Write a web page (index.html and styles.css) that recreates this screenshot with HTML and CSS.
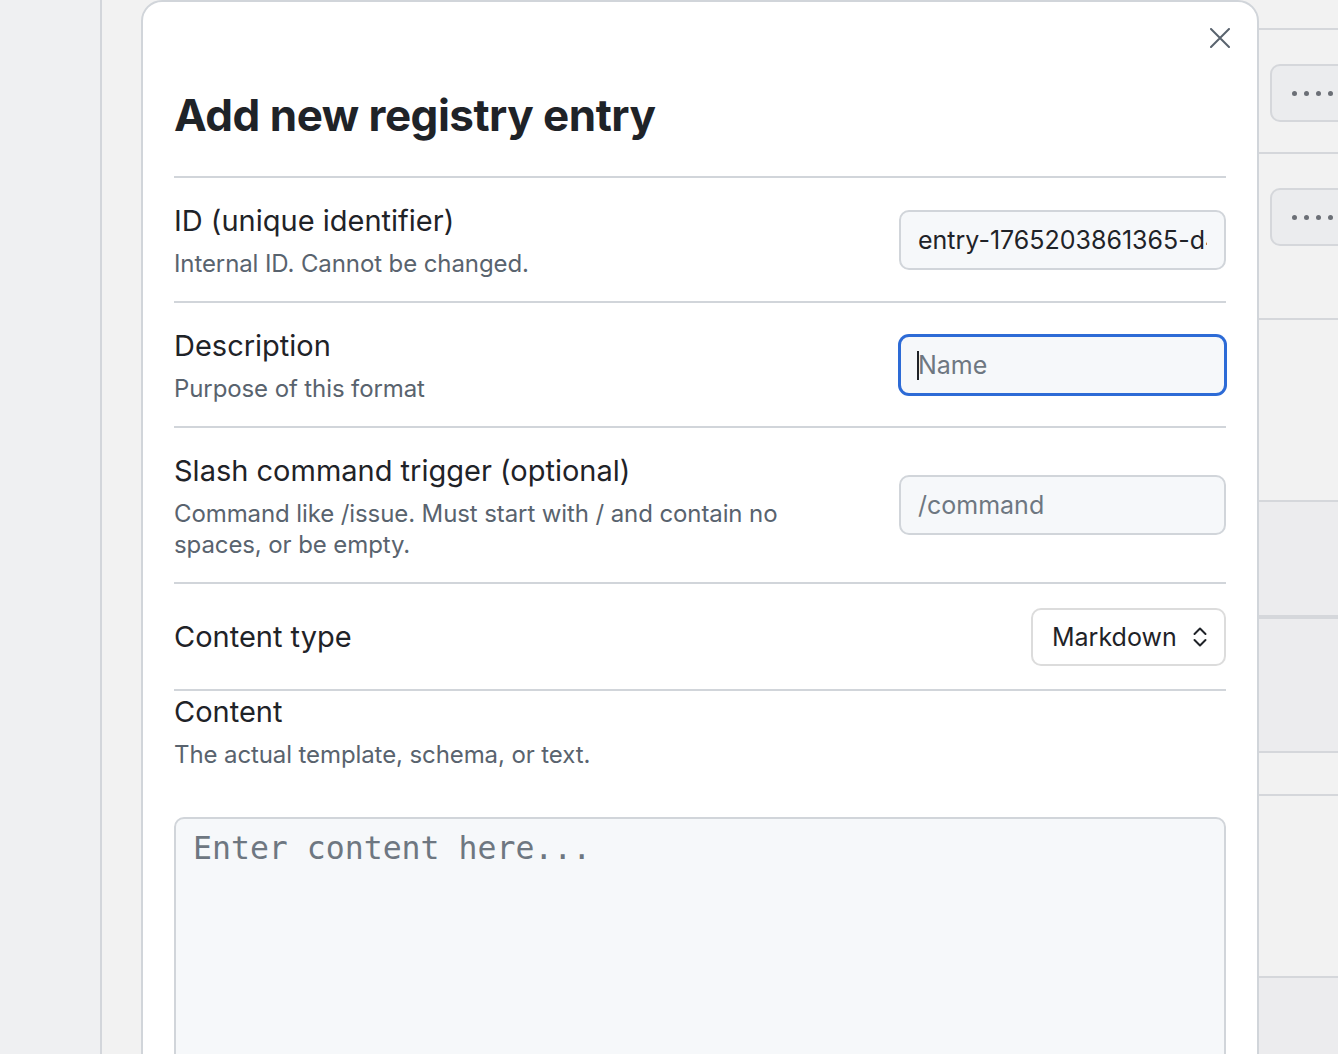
FILE: index.html
```html
<!DOCTYPE html>
<html lang="en">
<head>
  <meta charset="UTF-8" />
  <title>Registry</title>
  <meta name="viewport" content="width=device-width, initial-scale=1" />
  <link rel="stylesheet" href="styles.css">
</head>
<body>
  <aside class="sidebar" aria-label="Navigation"></aside>

  <main class="page">
    <!-- Registry list behind the dialog -->
    <div class="entry-list">
      <div class="entry-row row-head"></div>
      <div class="entry-row row-a">
        <span></span>
        <button class="more-btn" aria-label="More actions"><i></i><i></i><i></i><i></i><i></i></button>
      </div>
      <div class="entry-row row-b">
        <span></span>
        <button class="more-btn" aria-label="More actions"><i></i><i></i><i></i><i></i><i></i></button>
      </div>
      <div class="entry-row row-c"></div>
      <div class="entry-row row-d shaded thick"></div>
      <div class="entry-row row-e shaded"></div>
      <div class="entry-row row-f"></div>
      <div class="entry-row row-g"></div>
      <div class="entry-row row-h shaded"></div>
    </div>
  </main>

  <section class="dialog" role="dialog" aria-labelledby="dialogTitle">
    <header class="dialog-header">
      <button class="close-btn" aria-label="Close">
        <svg width="20" height="20" viewBox="0 0 20 20" fill="none" stroke="currentColor" stroke-width="2" stroke-linecap="round">
          <path d="M1 1L19 19M19 1L1 19" />
        </svg>
      </button>
      <h2 id="dialogTitle">Add new registry entry</h2>
    </header>

    <div class="field">
      <div class="field-text">
        <label for="entryId">ID (unique identifier)</label>
        <p>Internal ID. Cannot be changed.</p>
      </div>
      <input id="entryId" class="text-input" type="text" value="entry-1765203861365-d4k2" readonly />
    </div>

    <div class="field">
      <div class="field-text">
        <label for="entryDesc">Description</label>
        <p>Purpose of this format</p>
      </div>
      <span class="input-wrap focused">
        <input id="entryDesc" class="text-input" type="text" placeholder="Name" />
      </span>
    </div>

    <div class="field">
      <div class="field-text">
        <label for="entryCmd">Slash command trigger (optional)</label>
        <p>Command like /issue. Must start with / and contain no spaces, or be empty.</p>
      </div>
      <input id="entryCmd" class="text-input" type="text" placeholder="/command" />
    </div>

    <div class="field field-select">
      <div class="field-text">
        <label for="entryType">Content type</label>
      </div>
      <span class="select-wrap">
        <select id="entryType">
          <option>Markdown</option>
          <option>JSON</option>
          <option>Plain text</option>
        </select>
        <svg class="select-icon" width="14" height="20" viewBox="0 0 14 20" fill="none" stroke="#1f2328" stroke-width="2" stroke-linecap="round" stroke-linejoin="round">
          <path d="M1.5 7L7 1.5L12.5 7M1.5 13L7 18.5L12.5 13" />
        </svg>
      </span>
    </div>

    <div class="content-block">
      <label for="entryContent">Content</label>
      <p>The actual template, schema, or text.</p>
      <textarea id="entryContent" placeholder="Enter content here..."></textarea>
    </div>
  </section>
</body>
</html>
```

FILE: styles.css
```css
body {
  font-family: Inter, 'Noto Sans', sans-serif;
  margin: 0;
  color: #1f2328;
  display: flex;
  height: 100vh;
  overflow: hidden;
  background: #f2f2f2;
}
.sidebar {
  width: 100px;
  flex-shrink: 0;
  background: #eff0f2;
  border-right: 2px solid #d3d6db;
}
.page {
  flex: 1;
  background: #f2f2f2;
  overflow: hidden;
}

/* list rows */
.entry-list {
  margin-left: 520px;
  margin-right: -90px;
}
.entry-row {
  display: grid;
  grid-template-columns: 1fr 158px;
  align-items: start;
  border-bottom: 2px solid #d5d7db;
  box-sizing: content-box;
}
.entry-row.shaded {
  background: #ececee;
}
.entry-row.thick {
  border-bottom-width: 4px;
}
.row-head { height: 28px; }
.row-a { height: 122px; }
.row-b { height: 164px; }
.row-c { height: 180px; }
.row-d { height: 113px; }
.row-e { height: 132px; }
.row-f { height: 41px; }
.row-g { height: 180px; }
.row-h { height: 120px; }
.row-a .more-btn { margin-top: 34px; }
.row-b .more-btn { margin-top: 34px; }
.more-btn {
  height: 58px;
  width: 110px;
  background: #ebecee;
  border: 2px solid #d5d7db;
  border-radius: 10px;
  padding: 0 0 0 20px;
  display: flex;
  align-items: center;
  gap: 7px;
}
.more-btn i {
  width: 5px;
  height: 5px;
  border-radius: 50%;
  background: #6b6f76;
}

/* dialog */
.dialog {
  position: absolute;
  top: 0;
  left: 141px;
  width: 1118px;
  height: 1200px;
  box-sizing: border-box;
  background: white;
  border: 2px solid #d1d5da;
  border-radius: 21px;
  padding: 0 31px;
}
.dialog-header {
  display: flex;
  flex-direction: column;
  padding-top: 22px;
  border-bottom: 2px solid #d1d5da;
  height: 152px;
}
.close-btn {
  align-self: flex-end;
  margin-right: -8px;
  width: 28px;
  height: 28px;
  padding: 4px;
  border: none;
  background: none;
  color: #59636e;
  cursor: pointer;
}
.close-btn svg {
  display: block;
}
.dialog-header h2 {
  margin: 37px 0 0;
  font-size: 44px;
  line-height: 52px;
  font-weight: 700;
  letter-spacing: -0.5px;
  color: #1f2328;
}

.field {
  display: flex;
  justify-content: space-between;
  align-items: center;
  padding: 22.5px 0;
  border-bottom: 2px solid #d1d5da;
}
.field.field-select {
  padding: 23.5px 0;
}
.field-text {
  max-width: 620px;
}
.field-text label,
.content-block label {
  display: block;
  font-size: 29px;
  line-height: 40px;
  color: #1f2328;
}
.field-text p,
.content-block p {
  margin: 7px 0 0;
  font-size: 24px;
  line-height: 31px;
  letter-spacing: -0.1px;
  color: #59636e;
}

.text-input {
  width: 327px;
  height: 60px;
  box-sizing: border-box;
  padding: 0 17px;
  font-family: inherit;
  font-size: 25px;
  color: #1f2328;
  background: #f6f8fa;
  border: 2px solid #d1d5da;
  border-radius: 10px;
  outline: none;
}
.text-input::placeholder {
  color: #6e7781;
}
.input-wrap {
  position: relative;
  display: block;
}
.input-wrap.focused .text-input {
  border-color: #2d6bd6;
  box-shadow: 0 0 0 1px #2d6bd6;
}
/* text caret of the focused field */
.input-wrap.focused::after {
  content: '';
  position: absolute;
  left: 18px;
  top: 16px;
  width: 2px;
  height: 29px;
  background: #1f2328;
}

.select-wrap {
  position: relative;
  display: block;
}
.select-wrap select {
  appearance: none;
  -webkit-appearance: none;
  width: 195px;
  height: 58px;
  padding: 0 19px;
  font-family: inherit;
  font-size: 25px;
  color: #1f2328;
  background: white;
  border: 2px solid #dcdcdc;
  border-radius: 10px;
}
.select-icon {
  position: absolute;
  right: 19px;
  top: 19px;
  pointer-events: none;
}

.content-block {
  padding-top: 1px;
}
.content-block textarea {
  display: block;
  width: 100%;
  height: 320px;
  box-sizing: border-box;
  margin-top: 47px;
  padding: 9px 17px;
  font-family: 'DejaVu Sans Mono', 'Liberation Mono', monospace;
  font-size: 31.5px;
  line-height: 40px;
  color: #1f2328;
  background: #f6f8fa;
  border: 2px solid #d1d5da;
  border-radius: 10px;
  resize: none;
}
.content-block textarea::placeholder {
  color: #6e7781;
}
```
